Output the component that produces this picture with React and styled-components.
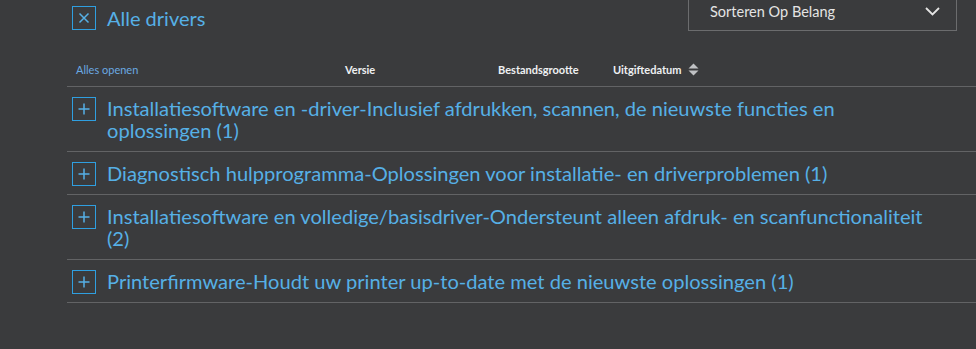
import React from "react";
import styled, { createGlobalStyle } from "styled-components";

const Global = createGlobalStyle`
  html, body {
    margin: 0;
    padding: 0;
    background: #3a3b3d;
    overflow: hidden;
  }
  body {
    font-family: Lato, "Noto Sans", sans-serif;
  }
`;

const Page = styled.div`
  width: 976px;
  height: 349px;
  background: #3a3b3d;
  padding-left: 67px;
  box-sizing: border-box;
  overflow: hidden;
`;

const TopBar = styled.div`
  display: flex;
  justify-content: space-between;
  align-items: flex-start;
  padding-right: 19px;
`;

const Chip = styled.button`
  display: flex;
  align-items: center;
  gap: 11px;
  margin: 6px 0 0 5px;
  padding: 0;
  background: none;
  border: none;
  color: #56b0e6;
  font-family: inherit;
  font-size: 20px;
  line-height: 24px;
  cursor: pointer;
`;

const IconBox = styled.span`
  width: 22px;
  height: 22px;
  border: 1px solid #2f9fe0;
  display: flex;
  align-items: center;
  justify-content: center;
  flex-shrink: 0;
  color: #56b0e6;
`;

const RowIcon = styled(IconBox)`
  margin-bottom: -2px;
`;

const Select = styled.div`
  width: 269px;
  height: 40px;
  margin-top: -9px;
  box-sizing: border-box;
  border: 1px solid #6b6c6e;
  display: flex;
  align-items: center;
  justify-content: space-between;
  padding: 0 16px 0 21px;
  color: #e4e4e4;
  font-size: 14.5px;
`;

const HeaderRow = styled.div`
  display: flex;
  align-items: center;
  margin-top: 32px;
  padding: 0 0 10px 9px;
  border-bottom: 1px solid #626365;
  font-size: 11px;
`;

const OpenAll = styled.span`
  width: 269px;
  color: #6aa9e2;
`;

const Col = styled.span`
  width: ${(p) => p.w}px;
  color: #eef0f2;
  font-weight: 700;
  display: flex;
  align-items: center;
  gap: 7px;
`;

const Row = styled.div`
  display: flex;
  align-items: flex-start;
  gap: 11px;
  padding: 10px 41px 10px 5px;
  border-bottom: 1px solid #626365;
`;

const Title = styled.span`
  color: #56b0e6;
  font-size: 20.1px;
  line-height: 22px;
`;

const Cross = () => (
  <svg width="12" height="12" viewBox="0 0 12 12">
    <path d="M1.5 1.5l9 9M10.5 1.5l-9 9" stroke="currentColor" strokeWidth="1.5" />
  </svg>
);

const Plus = () => (
  <svg width="12" height="12" viewBox="0 0 12 12">
    <path d="M6 0.5v11M0.5 6h11" stroke="currentColor" strokeWidth="1.5" />
  </svg>
);

const Chevron = () => (
  <svg width="15" height="9" viewBox="0 0 15 9">
    <path d="M1 1l6.5 6.5L14 1" stroke="#e4e4e4" strokeWidth="1.8" fill="none" />
  </svg>
);

const SortIcon = () => (
  <svg width="11" height="13" viewBox="0 0 11 13">
    <path d="M5.5 0.5L10.5 5.5H0.5Z" fill="#bfc1c4" />
    <path d="M5.5 12.5L10.5 7.5H0.5Z" fill="#bfc1c4" />
  </svg>
);

const rows = [
  "Installatiesoftware en -driver-Inclusief afdrukken, scannen, de nieuwste functies en oplossingen (1)",
  "Diagnostisch hulpprogramma-Oplossingen voor installatie- en driverproblemen (1)",
  "Installatiesoftware en volledige/basisdriver-Ondersteunt alleen afdruk- en scanfunctionaliteit (2)",
  "Printerfirmware-Houdt uw printer up-to-date met de nieuwste oplossingen (1)",
];

export default function App() {
  return (
    <Page>
      <Global />
      <TopBar>
        <Chip>
          <IconBox>
            <Cross />
          </IconBox>
          Alle drivers
        </Chip>
        <Select>
          <span>Sorteren Op Belang</span>
          <Chevron />
        </Select>
      </TopBar>
      <HeaderRow>
        <OpenAll>Alles openen</OpenAll>
        <Col w={153}>Versie</Col>
        <Col w={115}>Bestandsgrootte</Col>
        <Col w={120}>
          Uitgiftedatum
          <SortIcon />
        </Col>
      </HeaderRow>
      {rows.map((r) => (
        <Row key={r}>
          <RowIcon>
            <Plus />
          </RowIcon>
          <Title>{r}</Title>
        </Row>
      ))}
    </Page>
  );
}
